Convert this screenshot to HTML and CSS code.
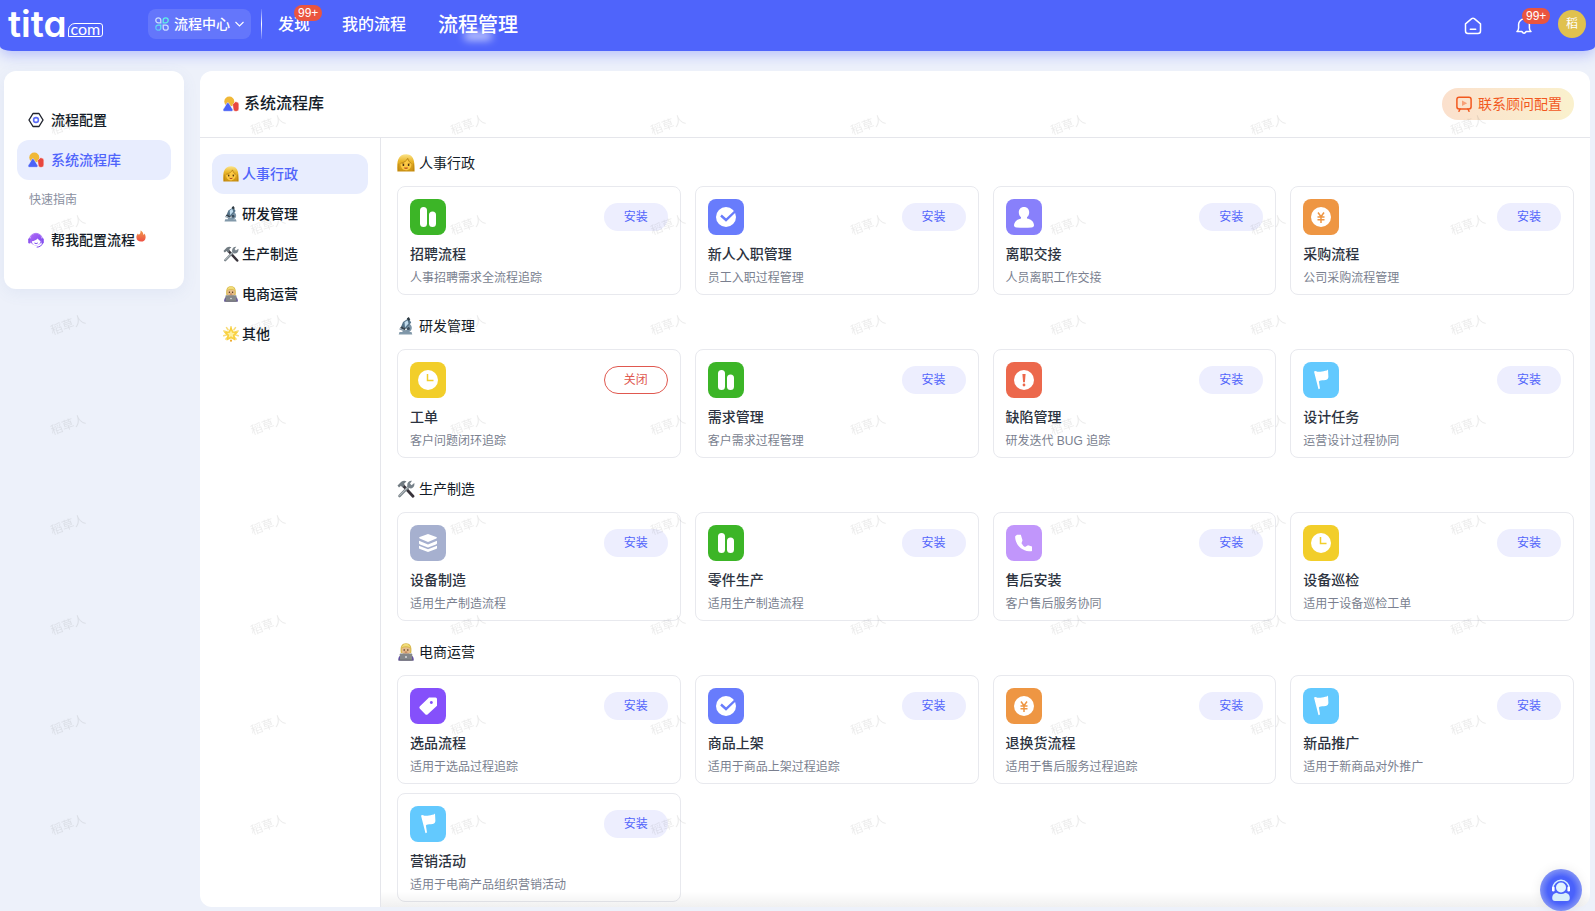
FILE: index.html
```
<!DOCTYPE html>
<html lang="zh-CN">
<head>
<meta charset="utf-8">
<meta name="viewport" content="width=device-width, initial-scale=1">
<title>系统流程库</title>
<link rel="stylesheet" href="styles.css">
</head>
<body>
<svg class="defs" aria-hidden="true">
  <defs>
    <linearGradient id="link-grad" x1="0" y1="1" x2="1" y2="0"><stop offset="0" stop-color="#5fb8ff"/><stop offset="1" stop-color="#5ff0e6"/></linearGradient>
    <linearGradient id="fire-grad" x1="0" y1="0" x2="0" y2="1"><stop offset="0" stop-color="#f09a4c"/><stop offset="1" stop-color="#ee4f43"/></linearGradient>
    <linearGradient id="hair-grad" x1="0" y1="0" x2="0" y2="1"><stop offset="0" stop-color="#fbe48a"/><stop offset=".4" stop-color="#e9b52a"/><stop offset="1" stop-color="#c98f12"/></linearGradient>
    <linearGradient id="agent-grad" x1="0" y1="0" x2="1" y2="1"><stop offset="0" stop-color="#b06bf5"/><stop offset="1" stop-color="#7a45f0"/></linearGradient>
    <symbol id="shapes" viewBox="0 0 16 16">
      <circle cx="6.300" cy="5.600" r="5" fill="#f0b837"/>
      <path d="M3.900 7.200Q4.900 5.600 5.900 7.200L9.800 13.600Q10.300 15.300 8.600 15.300H1.200Q-.4 15.300 .1 13.600Z" fill="#4b63f6" stroke="#fff" stroke-width=".5"/>
      <path d="M9.600 8.400 12.500 5.800Q15.800 5.600 15.800 8.400V13Q15.800 15.300 13.600 15.300H12.300Q10.800 15.300 10.400 13.400Z" fill="#e8473f" stroke="#fff" stroke-width=".4"/>
    </symbol>
    <symbol id="woman" viewBox="0 0 18 18">
      <path d="M.4 17.500C0 12 .2 8 1.200 5.500 2.500 2 5.500.2 9.500.3c4 .1 6.500 2.700 7.300 6.200.8 3.500.9 7.500.8 11Z" fill="url(#hair-grad)"/>
      <path d="M3.600 9.200C7.500 8.300 9.700 6.400 10.700 4.600c.8 2.400 2 3.900 3.600 4.800.3 4-2 6.800-5.300 6.800s-5.700-2.800-5.400-7Z" fill="#fcc944"/>
      <path d="M3.400 9.400C7.500 8.500 9.800 6.500 10.700 4.400c.8 2.600 2.200 4.300 3.800 5.200" fill="none" stroke="#a8740c" stroke-width=".7"/>
      <path d="M5.200 9.700h2M10.800 9.700h2" stroke="#85560e" stroke-width=".6"/>
      <circle cx="6.400" cy="11" r=".9" fill="#3c2a12"/><circle cx="11.600" cy="11" r=".9" fill="#3c2a12"/>
      <path d="M7.400 13.700q1.600 1 3.200 0" stroke="#b1421d" stroke-width="1.100" fill="none"/>
      <path d="M1.800 9.500v7.500M16.300 9.500v7.500" stroke="#a8740c" stroke-width=".5"/>
    </symbol>
    <symbol id="microscope" viewBox="0 0 18 18">
      <path d="M2.500 15h12l.8 2.500H1.700Z" fill="#8299aa"/>
      <path d="M12 6.500c4.200 2.300 3.600 7.500-.8 9H5.500v-2c5.200.3 6.700-2.500 4.500-5Z" fill="#7d95a7"/>
      <path d="m6 5 5.600-3.700 2.600 4.200-5 6.300-5-2.200Z" fill="#56748a"/>
      <path d="m7.500 5.200 3-2 1 3.200-3.500 4Z" fill="#c2dced"/>
      <path d="m9.800 1.500 2-1.400 1.500 2.400-2.200 1.300Z" fill="#2c3840"/>
      <path d="m4.500 9.300 4.400 2.200-1.400 1.800L3 11.100Z" fill="#34424e"/>
      <path d="m2.500 11.800 7 2.500" stroke="#8599a8" stroke-width="1.300"/>
      <circle cx="11.300" cy="11.500" r="1.600" fill="#3b4e5e"/>
    </symbol>
    <symbol id="tools" viewBox="0 0 18 18">
      <path d="m5.600 5 10.400 11.300" stroke="#38333a" stroke-width="2.800" stroke-linecap="round"/>
      <path d="M.5 5.500 4.300 1.700Q7 0 9.500 1.400L7.200 3.500l.3 2L5.500 7.400 4 5.700 2 7.400Z" fill="#717b82"/>
      <path d="m2.500 16 9.300-9.500" stroke="#7e888e" stroke-width="2.600" stroke-linecap="round"/>
      <path d="m2.500 15.700 9-9" stroke="#c8cdd0" stroke-width=".9"/>
      <path d="M10.300 5.800C9.800 2.800 12 .5 15 .8l-2 2.700 1.500 1.700L17.300 3c.8 3.200-1.900 5.900-4.600 5.300Z" fill="#77828a"/>
    </symbol>
    <symbol id="laptop" viewBox="0 0 18 18">
      <path d="M1.300 17.500c0-5 2-6 7.700-6s7.700 1 7.700 6Z" fill="#5943a4"/>
      <path d="M3.800 10C2.800 3 5 .2 9 .2S15.200 3 14.200 10Z" fill="#d8b84b"/>
      <path d="M4.800 5.200q4.200-1.800 8.400 0c.5 4-1 7-4.200 7S4.300 9 4.800 5.200Z" fill="#e5bd8c"/>
      <path d="M4.600 4.500Q9 2 13.400 4.500 12 .7 9 .7T4.600 4.500Z" fill="#f1dc79"/>
      <circle cx="7.200" cy="7" r=".8" fill="#50341e"/><circle cx="10.800" cy="7" r=".8" fill="#50341e"/>
      <path d="M7.700 9.100h2.600" stroke="#a8573c" stroke-width=".8"/>
      <rect x="2.800" y="10.400" width="12.400" height="7" rx=".8" fill="#85888a"/>
      <path d="M1.800 16.600h14.400v.9H1.800Z" fill="#66686a"/><circle cx="9" cy="14" r=".9" fill="#e4e4e4"/>
    </symbol>
    <symbol id="star" viewBox="0 0 18 18">
      <path d="M9 .8v3M1 5.500l3 1M17 5.500l-3 1M3.300 14.700l1.700-2M14.700 14.700l-1.700-2M4 1.800l1.700 2.500M14 1.800l-1.700 2.500M.8 11l3-1M17.200 11l-3-1" stroke="#f7dc7a" stroke-width="1.800" stroke-linecap="round"/>
      <path d="m9 2 2.100 4.600 5 .6-3.700 3.400 1 5L9 13.100l-4.400 2.500 1-5L1.900 7.200l5-.6Z" fill="#f9d03c" stroke="#f9d03c" stroke-width="1.300" stroke-linejoin="round"/>
      <path d="m9 4.800 1.300 2.800 3 .4-2.200 2.100.5 3L9 11.600l-2.600 1.500.5-3L4.700 8l3-.4Z" fill="#fef0a0"/>
      <circle cx="9" cy="16.500" r="1.200" fill="#efaa2e"/>
    </symbol>
    <symbol id="bars" viewBox="0 0 36 36"><rect x="10" y="8" width="7" height="20" rx="3.500"/><rect x="19" y="12.500" width="7" height="15.500" rx="3.500"/></symbol>
    <symbol id="check" viewBox="0 0 36 36"><circle cx="18" cy="18" r="10"/><path d="m13 16.500 5 4.500 9-8.500" fill="none" stroke="var(--tile)" stroke-width="2.400"/></symbol>
    <symbol id="person" viewBox="0 0 36 36"><path d="M18 8c-3.200 0-5.200 2.200-5.200 5.300 0 2 .8 4 2.200 5v1.300C11.500 20.500 8.500 22 8 26c-.1 1.500.7 2.200 2.500 2.400 5 .5 10 .5 15 0 1.800-.2 2.600-.9 2.500-2.400-.5-4-3.500-5.500-7-6.400v-1.300c1.400-1 2.200-3 2.200-5C23.200 10.200 21.200 8 18 8Z"/></symbol>
    <symbol id="yuan" viewBox="0 0 36 36"><circle cx="18" cy="18" r="10"/><path d="m15 13.500 3 4.300 3-4.300M14.500 18h7M14.500 20.700h7M18 17.800V24" fill="none" stroke="var(--tile)" stroke-width="1.500"/></symbol>
    <symbol id="clock" viewBox="0 0 36 36"><circle cx="18" cy="18" r="10"/><path d="M17.500 12v6.500h6" fill="none" stroke="var(--tile)" stroke-width="1.500"/></symbol>
    <symbol id="alert" viewBox="0 0 36 36"><circle cx="18" cy="18" r="10"/><path d="M16.400 12h3.200l-.7 8.300h-1.800Z" fill="var(--tile)"/><circle cx="18" cy="23" r="1.400" fill="var(--tile)"/></symbol>
    <symbol id="flag" viewBox="0 0 36 36"><path d="M11 9.500 12.700 9c2.800 1.600 6 .5 9.500-.3q2 0 2.800-1.200l.4 7.500c-.1 2.500-2 3.200-4.500 3.300-2.500 0-4.200 0-5 1.200l1.100 7-1.500.8Z"/></symbol>
    <symbol id="layers" viewBox="0 0 36 36"><path d="m18 9 8.300 3q1.400.8 0 1.600L18 17l-8.300-3.400q-1.400-.8 0-1.600Z"/><path d="m9 15.800 9 3.700 9-3.700v2.800q-.3.500-1 .8l-8 3-8-3q-.7-.3-1-.8ZM9 20.700l9 3.500 9-3.500v2.600q-.3.500-1 .8l-8 3-8-3q-.7-.3-1-.8Z"/></symbol>
    <symbol id="phone" viewBox="0 0 36 36"><path d="M9.200 11.200 11 9.800h3.800l1.700 5.500-1 3q1.500 2.800 3.500 3.700l3-1.700 4 1.200V26q-.8.500-3 .3C15.500 25.500 10 20 9.200 13Z"/></symbol>
    <symbol id="tag" viewBox="0 0 36 36"><path fill-rule="evenodd" d="M19 9.500h6.500q1.500 0 1.500 1.500v6.800l-9.500 8.600q-1 .8-2 0L9.700 20.600q-.8-1 0-2Zm2.300 3.400a1.500 1.500 0 1 0 .1 0Z"/></symbol>
    <pattern id="mark" width="200" height="100" patternUnits="userSpaceOnUse"><text class="mark-text" x="68" y="29" text-anchor="middle" transform="rotate(-20 68 25)">稻草人</text></pattern>
  </defs>
</svg>

<header class="topbar">
  <a class="logo" href="#" aria-label="tita.com"><span class="logo-name">tita</span><span class="logo-com">com</span></a>
  <button class="switcher" type="button">
    <svg class="switcher-icon" viewBox="0 0 14 14" fill="none" stroke="#c9dcff" stroke-width="1.300"><path d="M5.800 5.800H3.300A2.500 2.500 0 1 1 5.800 3.300Z"/><path d="M8.200 5.800V3.300a2.500 2.500 0 1 1 2.500 2.500Z" stroke="#5ff0e6"/><path d="M5.800 8.200v2.500a2.500 2.500 0 1 1-2.500-2.500Z" stroke="url(#link-grad)"/><path d="M8.200 8.200h2.500a2.500 2.500 0 1 1-2.500 2.500Z"/></svg>
    流程中心
    <svg class="chevron" viewBox="0 0 9 10" fill="none" stroke="#fff" stroke-width="1.100"><path d="m.5 3 4 4 4-4"/></svg>
  </button>
  <span class="divider"></span>
  <nav class="mainnav">
    <a href="#">发现<span class="badge">99+</span></a>
    <a href="#">我的流程</a>
    <a class="active" href="#">流程管理</a>
  </nav>
  <div class="tools">
    <button class="tool" type="button" aria-label="首页"><svg viewBox="0 0 18 18" fill="none" stroke="#fff" stroke-width="1.500" stroke-linejoin="round" stroke-linecap="round"><path d="M1.500 6.800 7.700 1.700q1.300-1 2.600 0l6.200 5.100V14q0 2.500-2.500 2.500H4q-2.500 0-2.500-2.500ZM6.300 12.300h5.400"/></svg></button>
    <button class="tool bell" type="button" aria-label="通知"><svg viewBox="0 0 18 18" fill="none" stroke="#fff" stroke-width="1.500" stroke-linejoin="round"><path d="M2 14.500h4.800Q9 18 11.200 14.500H16q-1.600-1.300-1.600-3.500V7.500a5.400 5.400 0 0 0-10.800 0V11Q3.600 13.200 2 14.500Z"/></svg><span class="badge">99+</span></button>
    <button class="avatar" type="button">稻</button>
  </div>
</header>

<div class="layout">
  <nav class="sidebar">
    <a class="side-item" href="#"><svg viewBox="0 0 16 16" fill="none"><path d="M5 1.500h6L15 8l-4 6.500H5L1 8Z" stroke="#20242e" stroke-width="1.400" stroke-linejoin="round"/><circle cx="8" cy="8" r="2.400" stroke="#5b6cf8" stroke-width="1.600"/></svg>流程配置</a>
    <a class="side-item active" href="#"><svg><use href="#shapes"/></svg>系统流程库</a>
    <p class="side-label">快速指南</p>
    <a class="side-item" href="#"><svg viewBox="0 0 16 16"><path d="M1.300 8a6.700 6.700 0 0 1 13.400 0" fill="none" stroke="#b284f7" stroke-width="1"/><circle cx="8" cy="7.500" r="5.900" fill="url(#agent-grad)"/><path d="M3.800 9.200c2.500-.1 4.600-1 5.900-2.600.8 1.300 1.500 2 2.900 2.400-.3 3-2.100 4.400-4.400 4.400s-4.100-1.300-4.400-4.200Z" fill="#fff"/><rect x=".2" y="6.300" width="2.500" height="5.200" rx="1.200" fill="#8f55f0"/><rect x="13.300" y="6.300" width="2.500" height="5.200" rx="1.200" fill="#8650ee"/><path d="M14.500 11q-.8 3.800-5.800 4.200M6.400 11q1.700 1.200 3.400 0" fill="none" stroke="#7a45f0"/></svg>帮我配置流程<svg class="fire" viewBox="0 0 10 12"><path d="M4.500.5C7.500 2 7 4 7.700 5q.7-.6.700-1.500C9.500 5 9.700 6.500 9.600 7.700 9.300 10.300 7.500 11.600 5 11.600S.5 10 .4 7.600C.3 5.300 1.300 4.500 1.900 3.500l.8 1.300C4.500 3.700 4.700 2.500 4.500.5Z" fill="url(#fire-grad)"/></svg></a>
  </nav>

  <main class="panel">
    <div class="panel-head">
      <h1 class="panel-title"><svg><use href="#shapes"/></svg>系统流程库</h1>
      <button class="contact" type="button"><svg viewBox="0 0 16 16" fill="none" stroke="#f2581e" stroke-width="1.500"><rect x=".9" y="1.200" width="14.200" height="11.800" rx="2.200"/><path d="m4 13-1 2.300M12 13l1 2.300" stroke-linecap="round"/><path d="m6 4.500 5.200 2.800L6 10.100Z" fill="#f7a077" stroke="none"/></svg>联系顾问配置</button>
    </div>
    <div class="panel-body">
      <nav class="cats">
        <a class="cat active" href="#"><svg><use href="#woman"/></svg>人事行政</a>
        <a class="cat" href="#"><svg><use href="#microscope"/></svg>研发管理</a>
        <a class="cat" href="#"><svg><use href="#tools"/></svg>生产制造</a>
        <a class="cat" href="#"><svg><use href="#laptop"/></svg>电商运营</a>
        <a class="cat" href="#"><svg><use href="#star"/></svg>其他</a>
      </nav>
      <div class="library">
        <section class="group">
          <h2 class="group-title"><svg><use href="#woman"/></svg>人事行政</h2>
          <div class="cards">
            <article class="card"><div class="card-top"><svg class="tile green"><use href="#bars"/></svg><button class="install" type="button">安装</button></div><h3>招聘流程</h3><p>人事招聘需求全流程追踪</p></article>
            <article class="card"><div class="card-top"><svg class="tile blue"><use href="#check"/></svg><button class="install" type="button">安装</button></div><h3>新人入职管理</h3><p>员工入职过程管理</p></article>
            <article class="card"><div class="card-top"><svg class="tile violet"><use href="#person"/></svg><button class="install" type="button">安装</button></div><h3>离职交接</h3><p>人员离职工作交接</p></article>
            <article class="card"><div class="card-top"><svg class="tile orange"><use href="#yuan"/></svg><button class="install" type="button">安装</button></div><h3>采购流程</h3><p>公司采购流程管理</p></article>
          </div>
        </section>
        <section class="group">
          <h2 class="group-title"><svg><use href="#microscope"/></svg>研发管理</h2>
          <div class="cards">
            <article class="card"><div class="card-top"><svg class="tile yellow"><use href="#clock"/></svg><button class="install close" type="button">关闭</button></div><h3>工单</h3><p>客户问题闭环追踪</p></article>
            <article class="card"><div class="card-top"><svg class="tile green"><use href="#bars"/></svg><button class="install" type="button">安装</button></div><h3>需求管理</h3><p>客户需求过程管理</p></article>
            <article class="card"><div class="card-top"><svg class="tile red"><use href="#alert"/></svg><button class="install" type="button">安装</button></div><h3>缺陷管理</h3><p>研发迭代 BUG 追踪</p></article>
            <article class="card"><div class="card-top"><svg class="tile sky"><use href="#flag"/></svg><button class="install" type="button">安装</button></div><h3>设计任务</h3><p>运营设计过程协同</p></article>
          </div>
        </section>
        <section class="group">
          <h2 class="group-title"><svg><use href="#tools"/></svg>生产制造</h2>
          <div class="cards">
            <article class="card"><div class="card-top"><svg class="tile slate"><use href="#layers"/></svg><button class="install" type="button">安装</button></div><h3>设备制造</h3><p>适用生产制造流程</p></article>
            <article class="card"><div class="card-top"><svg class="tile green"><use href="#bars"/></svg><button class="install" type="button">安装</button></div><h3>零件生产</h3><p>适用生产制造流程</p></article>
            <article class="card"><div class="card-top"><svg class="tile lilac"><use href="#phone"/></svg><button class="install" type="button">安装</button></div><h3>售后安装</h3><p>客户售后服务协同</p></article>
            <article class="card"><div class="card-top"><svg class="tile yellow"><use href="#clock"/></svg><button class="install" type="button">安装</button></div><h3>设备巡检</h3><p>适用于设备巡检工单</p></article>
          </div>
        </section>
        <section class="group">
          <h2 class="group-title"><svg><use href="#laptop"/></svg>电商运营</h2>
          <div class="cards">
            <article class="card"><div class="card-top"><svg class="tile purple"><use href="#tag"/></svg><button class="install" type="button">安装</button></div><h3>选品流程</h3><p>适用于选品过程追踪</p></article>
            <article class="card"><div class="card-top"><svg class="tile blue"><use href="#check"/></svg><button class="install" type="button">安装</button></div><h3>商品上架</h3><p>适用于商品上架过程追踪</p></article>
            <article class="card"><div class="card-top"><svg class="tile orange"><use href="#yuan"/></svg><button class="install" type="button">安装</button></div><h3>退换货流程</h3><p>适用于售后服务过程追踪</p></article>
            <article class="card"><div class="card-top"><svg class="tile sky"><use href="#flag"/></svg><button class="install" type="button">安装</button></div><h3>新品推广</h3><p>适用于新商品对外推广</p></article>
            <article class="card"><div class="card-top"><svg class="tile sky"><use href="#flag"/></svg><button class="install" type="button">安装</button></div><h3>营销活动</h3><p>适用于电商产品组织营销活动</p></article>
          </div>
        </section>
      </div>
    </div>
  </main>
</div>

<svg class="watermark" aria-hidden="true"><rect width="100%" height="100%" fill="url(#mark)"/></svg>

<button class="support" type="button" aria-label="在线客服"><svg viewBox="0 0 20 22"><path d="M1.800 9.500a8.200 8.200 0 0 1 16.400 0" fill="none" stroke="#d6f0ff" stroke-width="1.500"/><rect x="1" y="7.500" width="2.600" height="5" rx="1.300" fill="#fff"/><rect x="16.400" y="7.500" width="2.600" height="5" rx="1.300" fill="#fff"/><circle cx="10" cy="8.500" r="5" fill="#e2f4ff"/><path d="M5.500 13.700q4.500 2.600 9 0 4.300 1 4.300 5.300 0 3-2.800 3H4q-2.800 0-2.800-3 0-4.300 4.300-5.300Z" fill="#d6eefb"/></svg></button>
</body>
</html>
```
FILE: styles.css
```
* { box-sizing: border-box; }

html, body { height: 100%; }

body {
  margin: 0;
  display: flex;
  flex-direction: column;
  background: #edf1fa;
  color: #141c28;
  font-family: "Liberation Sans", "Noto Sans CJK SC", sans-serif;
  font-size: 14px;
  line-height: 22px;
  overflow: hidden;
}

a { color: inherit; text-decoration: none; }
button { font: inherit; border: 0; padding: 0; background: none; cursor: pointer; }
h1, h2, h3, p { margin: 0; }
svg { display: block; flex: none; }
.defs { position: absolute; width: 0; height: 0; }

/* top bar */
.topbar {
  position: relative;
  z-index: 3;
  flex: none;
  display: flex;
  align-items: center;
  height: 51px;
  padding: 0 9px 3px 8px;
  background: #4f64fb;
  border-radius: 0 0 12px 12px / 0 0 5px 5px;
  box-shadow: 0 4px 14px rgba(79, 100, 251, .35);
  color: #fff;
}

.logo {
  display: flex;
  align-items: flex-end;
  gap: 1px;
  width: 140px;
}
.logo-name {
  font-family: Inter, sans-serif;
  font-size: 37px;
  font-weight: 600;
  line-height: 26px;
  font-feature-settings: "cv11";
}
.logo-com {
  height: 14px;
  padding: 0 2px;
  border: 1px solid #fff;
  border-radius: 7px 3px 3px 0;
  font-family: Lato, sans-serif;
  font-size: 16px;
  line-height: 9px;
}

.switcher {
  display: flex;
  align-items: center;
  gap: 5px;
  height: 30px;
  padding: 0 7px;
  border-radius: 8px;
  background: rgba(255, 255, 255, .12);
  color: #fff;
  font-weight: 500;
}
.switcher-icon { width: 14px; height: 14px; }
.chevron { width: 9px; height: 10px; }

.divider {
  width: 1px;
  height: 30px;
  margin: 0 16px 0 10px;
  background: linear-gradient(rgba(255, 255, 255, .1), #fff, rgba(255, 255, 255, .1));
}

.mainnav {
  display: flex;
  align-items: center;
  gap: 32px;
  padding-top: 2px;
  font-size: 16px;
  font-weight: 500;
}
.mainnav a { position: relative; }
.mainnav .active { font-size: 20px; }
.mainnav .active::after {
  content: "";
  position: absolute;
  left: 26px;
  bottom: -4px;
  width: 28px;
  height: 8px;
  border-radius: 4px;
  background: rgba(255, 255, 255, .7);
  filter: blur(4px);
}

.badge {
  position: absolute;
  top: -9px;
  left: 16px;
  padding: 0 4px;
  border-radius: 8px;
  background: #ea553f;
  color: #fff;
  font-size: 12px;
  font-weight: 400;
  line-height: 16px;
}

.tools {
  display: flex;
  align-items: center;
  gap: 33px;
  margin-left: auto;
}
.tool { position: relative; padding-top: 4px; }
.tool svg { width: 18px; height: 18px; }
.bell { margin-right: -8px; }
.bell .badge { top: -5px; left: 7px; }
.avatar {
  width: 28px;
  height: 28px;
  border-radius: 50%;
  background: #e0c14f;
  color: #fff;
  font-size: 12px;
}

/* page */
.layout {
  flex: 1;
  display: flex;
  align-items: flex-start;
  gap: 16px;
  min-height: 0;
  padding: 20px 5px 4px 4px;
}

.sidebar {
  flex: none;
  width: 180px;
  padding: 29px 13px;
  border-radius: 12px;
  background: #fff;
  box-shadow: 0 4px 16px rgba(90, 110, 180, .08);
}
.side-item {
  display: flex;
  align-items: center;
  gap: 7px;
  height: 40px;
  padding: 0 11px;
  border-radius: 12px;
  font-weight: 500;
}
.side-item svg { width: 16px; height: 16px; }
.side-item .fire { width: 10px; height: 12px; margin: -8px 0 0 -6px; }
.side-item.active, .cat.active { background: #e8edfe; color: #4f64fb; }
.side-label { padding: 0 12px; color: #8a8f9f; font-size: 12px; line-height: 40px; }

.panel {
  flex: 1;
  align-self: stretch;
  display: flex;
  flex-direction: column;
  min-width: 0;
  border-radius: 12px;
  background: #fff;
  overflow: hidden;
}
.panel-head {
  flex: none;
  display: flex;
  align-items: center;
  justify-content: space-between;
  height: 67px;
  padding: 0 16px 0 23px;
  border-bottom: 1px solid #e5e6eb;
}
.panel-title {
  display: flex;
  align-items: center;
  gap: 5px;
  font-size: 16px;
  font-weight: 500;
  line-height: 24px;
}
.panel-title svg { width: 16px; height: 16px; }
.contact {
  display: flex;
  align-items: center;
  gap: 6px;
  height: 32px;
  padding: 0 12px 0 14px;
  border-radius: 16px;
  background: linear-gradient(90deg, #fbe0cd, #faf1cd);
  color: #f2581e;
}
.contact svg { width: 16px; height: 16px; }

.panel-body { flex: 1; display: flex; min-height: 0; }
.cats {
  flex: none;
  width: 181px;
  padding: 16px 12px;
  border-right: 1px solid #e5e6eb;
}
.cat {
  display: flex;
  align-items: center;
  gap: 3px;
  height: 40px;
  padding: 0 11px;
  border-radius: 12px;
  font-weight: 500;
}
.cat svg { width: 16px; height: 16px; }

.library {
  position: relative;
  flex: 1;
  min-width: 0;
  padding: 0 16px;
}
.library::after {
  content: "";
  position: absolute;
  left: 0;
  right: 0;
  bottom: 0;
  height: 16px;
  background: linear-gradient(rgba(0, 0, 0, 0), rgba(0, 0, 0, .06));
}
.group { padding: 14px 0 6px; }
.group-title {
  display: flex;
  align-items: center;
  gap: 4px;
  margin-bottom: 12px;
  font-size: 14px;
  font-weight: 400;
}
.group-title svg { width: 18px; height: 18px; }

.cards {
  display: grid;
  grid-template-columns: repeat(4, minmax(0, 1fr));
  gap: 9px 14px;
}
.card {
  padding: 12px 12px 6px;
  border: 1px solid #e8e9ee;
  border-radius: 8px;
}
.card-top { display: flex; align-items: center; justify-content: space-between; margin-bottom: 8px; }
.card h3 { margin-bottom: 3px; color: #2c3340; font-size: 14px; font-weight: 500; line-height: 22px; }
.card p { color: #7a7f8f; font-size: 12px; line-height: 20px; }

.tile { width: 36px; height: 36px; border-radius: 8px; background: var(--tile); fill: #fff; }
.green { --tile: #3cb527; }
.blue { --tile: #687cfc; }
.violet { --tile: #8880fb; }
.orange { --tile: #ee9643; }
.yellow { --tile: #f2ce2a; }
.red { --tile: #ec684c; }
.sky { --tile: #63c9fe; }
.slate { --tile: #a6b0cf; }
.lilac { --tile: #c196fb; }
.purple { --tile: #8550fb; }

.install {
  width: 64px;
  height: 28px;
  border-radius: 14px;
  background: #edeefe;
  color: #5265fb;
  font-size: 12px;
  line-height: 26px;
}
.close { border: 1px solid #e0584f; background: #fff; color: #e0584f; }

.watermark {
  position: absolute;
  inset: 0;
  z-index: 2;
  width: 100%;
  height: 100%;
  pointer-events: none;
}
.mark-text {
  fill: rgba(0, 0, 0, .08);
  font-family: "Noto Sans CJK SC", sans-serif;
  font-size: 12px;
}

.support {
  position: fixed;
  right: 13px;
  bottom: 0;
  z-index: 4;
  display: grid;
  place-items: center;
  width: 42px;
  height: 42px;
  border-radius: 50%;
  background: radial-gradient(circle, #4a62fb 45%, #8495f4 72%);
  box-shadow: 0 0 12px rgba(0, 0, 0, .08);
}
.support svg { width: 20px; height: 22px; }
```
